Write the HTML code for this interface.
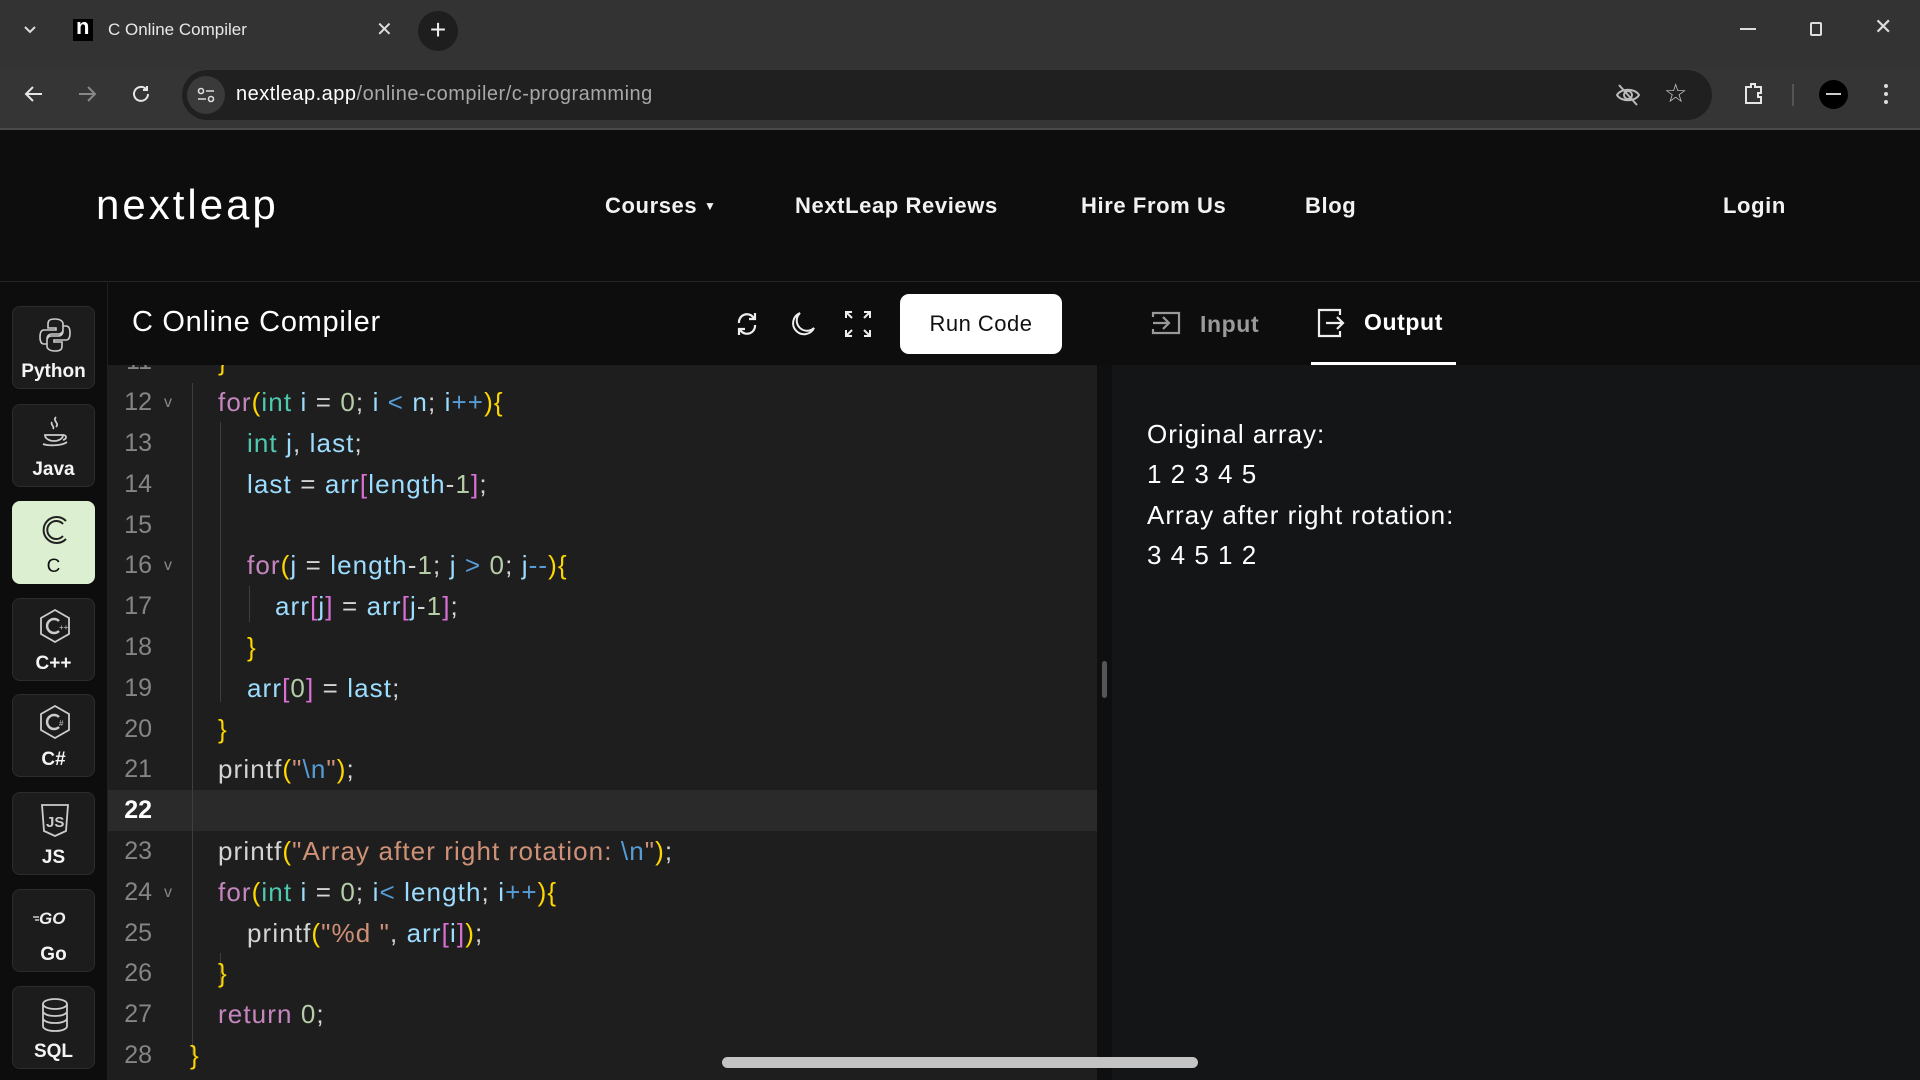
<!DOCTYPE html>
<html><head><meta charset="utf-8">
<style>
*{box-sizing:border-box;margin:0;padding:0}
body{width:1920px;height:1080px;overflow:hidden;background:#0d0d0d;font-family:"Liberation Sans",sans-serif;position:relative;color:#fff}
.abs{position:absolute}
#tabs{left:0;top:0;width:1920px;height:69px;background:#333}
#tool{left:0;top:69px;width:1920px;height:61px;background:#353535;border-bottom:2px solid #4a4a4a}
#omni{left:182px;top:70px;width:1530px;height:50px;border-radius:25px;background:#202020}
#hdr{left:0;top:130px;width:1920px;height:152px;background:#0d0d0d;border-bottom:1px solid #262626}
.nav{top:193px;font-size:22px;font-weight:bold;color:#f2f2f2;letter-spacing:0.6px}
#side{left:0;top:283px;width:108px;height:797px;background:#0d0d0d}
.lb{position:absolute;left:12px;width:83px;height:83px;background:#1c1c1c;border:1px solid #2c2c2c;border-radius:8px;text-align:center}
.lb svg{position:absolute;left:24px;top:8px}
.lb span{position:absolute;left:0;right:0;top:54px;font-size:19px;font-weight:bold;color:#f4f4f4}
#edtop{left:108px;top:283px;width:1004px;height:82px;background:#0d0d0d}
#ed{left:108px;top:365px;width:989px;height:715px;background:#1e1e1e;overflow:hidden}
.ln{position:absolute;left:0;width:44px;text-align:right;font-size:25px;color:#858585;line-height:41px}
.cl{position:absolute;font-size:26px;line-height:41px;white-space:pre;color:#d4d4d4;letter-spacing:1.1px}
.k{color:#c586c0}.t{color:#4ec9b0}.v{color:#9cdcfe}.n{color:#b5cea8}.y{color:#ffd700}.p{color:#da70d6}.b{color:#569cd6}.s{color:#ce9178}
.g{position:absolute;width:1px;background:#3e3e3e}
#out{left:1112px;top:365px;width:808px;height:715px;background:#141517}
.o{position:absolute;left:1147px;font-size:26px;color:#fff;letter-spacing:1px}
</style></head><body>
<div id="tabs" class="abs"></div>
<svg class="abs" style="left:22px;top:24px" width="16" height="12"><path d="M3 3l5 5 5-5" stroke="#ddd" stroke-width="2" fill="none"/></svg>
<div class="abs" style="left:73px;top:19px;width:20px;height:22px;background:#000"></div>
<div class="abs" style="left:76px;top:14px;font-size:22px;font-weight:bold;color:#fff">n</div>
<div class="abs" style="left:108px;top:20px;font-size:17px;color:#e8e8e8">C Online Compiler</div>
<div class="abs" style="left:376px;top:17px;font-size:20px;color:#ddd">✕</div>
<div class="abs" style="left:418px;top:11px;width:40px;height:40px;border-radius:20px;background:#1e1e1e;color:#eee;font-size:28px;text-align:center;line-height:38px">+</div>
<div class="abs" style="left:1740px;top:28px;width:16px;height:2px;background:#ddd"></div>
<div class="abs" style="left:1810px;top:22px;width:12px;height:14px;border:2px solid #ddd;border-radius:2px"></div>
<div class="abs" style="left:1874px;top:14px;font-size:22px;color:#ddd">✕</div>
<div id="tool" class="abs"></div>
<svg class="abs" style="left:22px;top:83px" width="24" height="22"><path d="M20 11H4M11 4l-7 7 7 7" stroke="#e6e6e6" stroke-width="2" fill="none"/></svg>
<svg class="abs" style="left:75px;top:83px" width="24" height="22"><path d="M4 11h16M13 4l7 7-7 7" stroke="#888" stroke-width="2" fill="none"/></svg>
<svg class="abs" style="left:130px;top:83px" width="24" height="22"><path d="M18 11a7 7 0 1 1-2-5M17 3v4h-4" stroke="#e6e6e6" stroke-width="2" fill="none"/></svg>
<div id="omni" class="abs"></div>
<div class="abs" style="left:187px;top:76px;width:38px;height:38px;border-radius:19px;background:#3a3a3a"></div>
<svg class="abs" style="left:196px;top:85px" width="20" height="20"><circle cx="5" cy="6" r="2.5" stroke="#ddd" fill="none" stroke-width="1.6"/><path d="M10 6h8M2 14h8" stroke="#ddd" stroke-width="1.6"/><circle cx="15" cy="14" r="2.5" stroke="#ddd" fill="none" stroke-width="1.6"/></svg>
<div class="abs" style="left:236px;top:83px;font-size:20px;color:#fff;letter-spacing:0.5px">nextleap.app<span style="color:#a8a8a8">/online-compiler/c-programming</span></div>
<svg class="abs" style="left:1614px;top:82px" width="28" height="26"><path d="M3 13c4-7 18-7 22 0c-4 7-18 7-22 0z" stroke="#bbb" stroke-width="2" fill="none"/><circle cx="14" cy="13" r="4" stroke="#bbb" stroke-width="2" fill="none"/><path d="M5 3l18 20" stroke="#bbb" stroke-width="2"/></svg>
<div class="abs" style="left:1664px;top:78px;font-size:26px;color:#ccc">☆</div>
<svg class="abs" style="left:1741px;top:81px" width="26" height="26"><path d="M5 6h5V3h4v3h6v6h-3v4h3v6H5z" stroke="#e6e6e6" stroke-width="2" fill="none"/></svg>
<div class="abs" style="left:1792px;top:84px;width:2px;height:22px;background:#555"></div>
<div class="abs" style="left:1819px;top:80px;width:29px;height:29px;border-radius:15px;background:#000"></div>
<div class="abs" style="left:1826px;top:93px;width:15px;height:2px;background:#ccc"></div>
<div class="abs" style="left:1884px;top:84px;width:4px;height:4px;border-radius:2px;background:#ddd;box-shadow:0 8px 0 #ddd,0 16px 0 #ddd"></div>

<div id="hdr" class="abs"></div>
<div class="abs" style="left:96px;top:181px;font-size:42px;color:#fff;letter-spacing:3px">nextleap</div>
<div class="abs nav" style="left:605px">Courses <span style="font-size:12px;vertical-align:3px">▼</span></div>
<div class="abs nav" style="left:795px">NextLeap Reviews</div>
<div class="abs nav" style="left:1081px">Hire From Us</div>
<div class="abs nav" style="left:1305px">Blog</div>
<div class="abs nav" style="left:1723px">Login</div>

<div id="side" class="abs">
<div class="lb" style="top:23px"><svg width="36" height="40"><path d="M18 4c-6 0-7 2-7 5v4h8v2H7c-3 0-4 3-4 7s1 7 4 7h3v-5c0-3 2-5 5-5h7c2 0 4-2 4-4V9c0-3-3-5-8-5z M18 36c6 0 7-2 7-5v-4h-8v-2h12c3 0 4-3 4-7s-1-7-4-7h-3v5c0 3-2 5-5 5h-7c-2 0-4 2-4 4v6c0 3 3 5 8 5z" stroke="#ccc" stroke-width="1.6" fill="none"/></svg><span>Python</span></div>
<div class="lb" style="top:121px"><svg width="36" height="40"><path d="M19 4c-4 4 4 6 0 10M15 9c-2 3 3 4 1 7M8 22h18c0 4-5 6-9 6s-9-2-9-6zM6 31c5 2 19 2 24-2M26 22c4 0 4 4 0 5" stroke="#ccc" stroke-width="1.8" fill="none"/></svg><span>Java</span></div>
<div class="lb" style="top:218px;background:#dcefd0;border-color:#dcefd0"><svg width="36" height="40"><path d="M29 11a13 13 0 1 0 0 18M26 14a9 9 0 1 0 0 12" stroke="#222" stroke-width="2" fill="none"/></svg><span style="color:#111;font-weight:normal">C</span></div>
<div class="lb" style="top:315px"><svg width="36" height="40"><path d="M18 3l14 8v16l-14 8-14-8V11z" stroke="#ccc" stroke-width="1.8" fill="none"/><path d="M22 14a7 7 0 1 0 0 10" stroke="#ccc" stroke-width="2.5" fill="none"/><text x="22" y="23" font-size="8" fill="#ccc" font-family="Liberation Sans">++</text></svg><span>C++</span></div>
<div class="lb" style="top:411px"><svg width="36" height="40"><path d="M18 3l14 8v16l-14 8-14-8V11z" stroke="#ccc" stroke-width="1.8" fill="none"/><path d="M22 14a7 7 0 1 0 0 10" stroke="#ccc" stroke-width="2.5" fill="none"/><text x="22" y="23" font-size="8" fill="#ccc" font-family="Liberation Sans">#</text></svg><span>C#</span></div>
<div class="lb" style="top:509px"><svg width="36" height="40"><path d="M5 4h26l-2 26-11 5-11-5z" stroke="#ccc" stroke-width="1.8" fill="none"/><text x="9" y="26" font-size="15" fill="#ccc" font-weight="bold" font-family="Liberation Sans">JS</text></svg><span>JS</span></div>
<div class="lb" style="top:606px"><svg width="40" height="40" style="left:20px"><text x="6" y="26" font-size="17" font-style="italic" font-weight="bold" fill="#eee" font-family="Liberation Sans">GO</text><path d="M0 19h6M2 22h4" stroke="#eee" stroke-width="1.2"/></svg><span>Go</span></div>
<div class="lb" style="top:703px"><svg width="36" height="40"><ellipse cx="18" cy="9" rx="12" ry="5" stroke="#ccc" stroke-width="1.8" fill="none"/><path d="M6 9v22c0 3 5 5 12 5s12-2 12-5V9M6 16c0 3 5 5 12 5s12-2 12-5M6 23c0 3 5 5 12 5s12-2 12-5" stroke="#ccc" stroke-width="1.8" fill="none"/></svg><span>SQL</span></div>
</div>
<div class="abs" style="left:107px;top:283px;width:1px;height:797px;background:#1f1f1f"></div>

<div id="edtop" class="abs"></div>
<div class="abs" style="left:132px;top:306px;font-size:29px;color:#fff;letter-spacing:0.7px">C Online Compiler</div>
<svg class="abs" style="left:733px;top:309px" width="28" height="30"><path d="M6 14a8 8 0 0 1 14-6l2 2M22 16a8 8 0 0 1-14 6l-2-2M22 4v6h-6M6 26v-6h6" stroke="#eee" stroke-width="2.2" fill="none"/></svg>
<svg class="abs" style="left:788px;top:309px" width="30" height="30"><path d="M12 4a11 11 0 1 0 14 15A10 10 0 0 1 12 4z" stroke="#eee" stroke-width="2" fill="none"/></svg>
<svg class="abs" style="left:843px;top:309px" width="30" height="30"><path d="M3 9V3h6M3 3l6 6M27 9V3h-6M27 3l-6 6M3 21v6h6M3 27l6-6M27 21v6h-6M27 27l-6-6" stroke="#eee" stroke-width="2" fill="none"/></svg>
<div class="abs" style="left:900px;top:294px;width:162px;height:60px;border-radius:9px;background:#fff;color:#111;font-size:22px;text-align:center;line-height:60px;letter-spacing:0.5px">Run Code</div>
<svg class="abs" style="left:1150px;top:309px" width="32" height="28"><path d="M3 8V4h26v20H3v-4M3 14h16M13 8l6 6-6 6" stroke="#999" stroke-width="2.2" fill="none"/></svg>
<div class="abs" style="left:1200px;top:311px;font-size:23px;font-weight:bold;color:#9a9a9a;letter-spacing:0.6px">Input</div>
<svg class="abs" style="left:1316px;top:307px" width="30" height="32"><path d="M24 8V3H3v26h21v-5M10 16h17M21 10l6 6-6 6" stroke="#eee" stroke-width="2.2" fill="none"/></svg>
<div class="abs" style="left:1364px;top:309px;font-size:23px;font-weight:bold;color:#fff;letter-spacing:0.6px">Output</div>
<div class="abs" style="left:1311px;top:362px;width:145px;height:3px;background:#fff"></div>

<div id="ed" class="abs">
<div class="abs" style="left:0;top:425px;width:989px;height:41px;background:#2a2a2a"></div>
<div class="g" style="left:84px;top:18px;height:672px"></div>
<div class="g" style="left:112px;top:57px;height:280px"></div>
<div class="g" style="left:141px;top:221px;height:36px"></div>
<div class="g" style="left:112px;top:588px;height:36px"></div>
</div>
<div id="code" class="abs" style="left:108px;top:365px;width:989px;height:715px;overflow:hidden">
<div class="ln" style="top:-24px">11</div><div class="cl y" style="left:110px;top:-24px">}</div>
<div class="ln" style="top:17px">12</div><div class="cl" style="left:56px;top:17px;font-size:16px;color:#888">v</div>
<div class="cl" style="left:110px;top:17px"><span class="k">for</span><span class="y">(</span><span class="t">int</span> <span class="v">i</span> = <span class="n">0</span>; <span class="v">i</span> <span class="b">&lt;</span> <span class="v">n</span>; <span class="v">i</span><span class="b">++</span><span class="y">){</span></div>
<div class="ln" style="top:58px">13</div><div class="cl" style="left:139px;top:58px"><span class="t">int</span> <span class="v">j</span>, <span class="v">last</span>;</div>
<div class="ln" style="top:99px">14</div><div class="cl" style="left:139px;top:99px"><span class="v">last</span> = <span class="v">arr</span><span class="p">[</span><span class="v">length</span>-<span class="n">1</span><span class="p">]</span>;</div>
<div class="ln" style="top:140px">15</div>
<div class="ln" style="top:180px">16</div><div class="cl" style="left:56px;top:180px;font-size:16px;color:#888">v</div>
<div class="cl" style="left:139px;top:180px"><span class="k">for</span><span class="y">(</span><span class="v">j</span> = <span class="v">length</span>-<span class="n">1</span>; <span class="v">j</span> <span class="b">&gt;</span> <span class="n">0</span>; <span class="v">j</span><span class="b">--</span><span class="y">){</span></div>
<div class="ln" style="top:221px">17</div><div class="cl" style="left:167px;top:221px"><span class="v">arr</span><span class="p">[</span><span class="v">j</span><span class="p">]</span> = <span class="v">arr</span><span class="p">[</span><span class="v">j</span>-<span class="n">1</span><span class="p">]</span>;</div>
<div class="ln" style="top:262px">18</div><div class="cl y" style="left:139px;top:262px">}</div>
<div class="ln" style="top:303px">19</div><div class="cl" style="left:139px;top:303px"><span class="v">arr</span><span class="p">[</span><span class="n">0</span><span class="p">]</span> = <span class="v">last</span>;</div>
<div class="ln" style="top:344px">20</div><div class="cl y" style="left:110px;top:344px">}</div>
<div class="ln" style="top:384px">21</div><div class="cl" style="left:110px;top:384px">printf<span class="y">(</span><span class="s">"</span><span class="b">\n</span><span class="s">"</span><span class="y">)</span>;</div>
<div class="ln" style="top:425px;color:#fff;font-weight:bold">22</div>
<div class="ln" style="top:466px">23</div><div class="cl" style="left:110px;top:466px">printf<span class="y">(</span><span class="s">"Array after right rotation: </span><span class="b">\n</span><span class="s">"</span><span class="y">)</span>;</div>
<div class="ln" style="top:507px">24</div><div class="cl" style="left:56px;top:507px;font-size:16px;color:#888">v</div>
<div class="cl" style="left:110px;top:507px"><span class="k">for</span><span class="y">(</span><span class="t">int</span> <span class="v">i</span> = <span class="n">0</span>; <span class="v">i</span><span class="b">&lt;</span> <span class="v">length</span>; <span class="v">i</span><span class="b">++</span><span class="y">){</span></div>
<div class="ln" style="top:548px">25</div><div class="cl" style="left:139px;top:548px">printf<span class="y">(</span><span class="s">"%d "</span>, <span class="v">arr</span><span class="p">[</span><span class="v">i</span><span class="p">]</span><span class="y">)</span>;</div>
<div class="ln" style="top:588px">26</div><div class="cl y" style="left:110px;top:588px">}</div>
<div class="ln" style="top:629px">27</div><div class="cl" style="left:110px;top:629px"><span class="k">return</span> <span class="n">0</span>;</div>
<div class="ln" style="top:670px">28</div><div class="cl y" style="left:82px;top:670px">}</div>
</div>
<div class="abs" style="left:1097px;top:365px;width:15px;height:715px;background:#0f0f0f"></div>
<div class="abs" style="left:1102px;top:661px;width:5px;height:37px;border-radius:3px;background:#555"></div>
<div id="out" class="abs"></div>
<div class="o" style="top:419px">Original array:</div>
<div class="o" style="top:459px">1 2 3 4 5</div>
<div class="o" style="top:500px">Array after right rotation:</div>
<div class="o" style="top:540px">3 4 5 1 2</div>
<div class="abs" style="left:722px;top:1057px;width:476px;height:11px;border-radius:6px;background:#c4c4c4"></div>
</body></html>
